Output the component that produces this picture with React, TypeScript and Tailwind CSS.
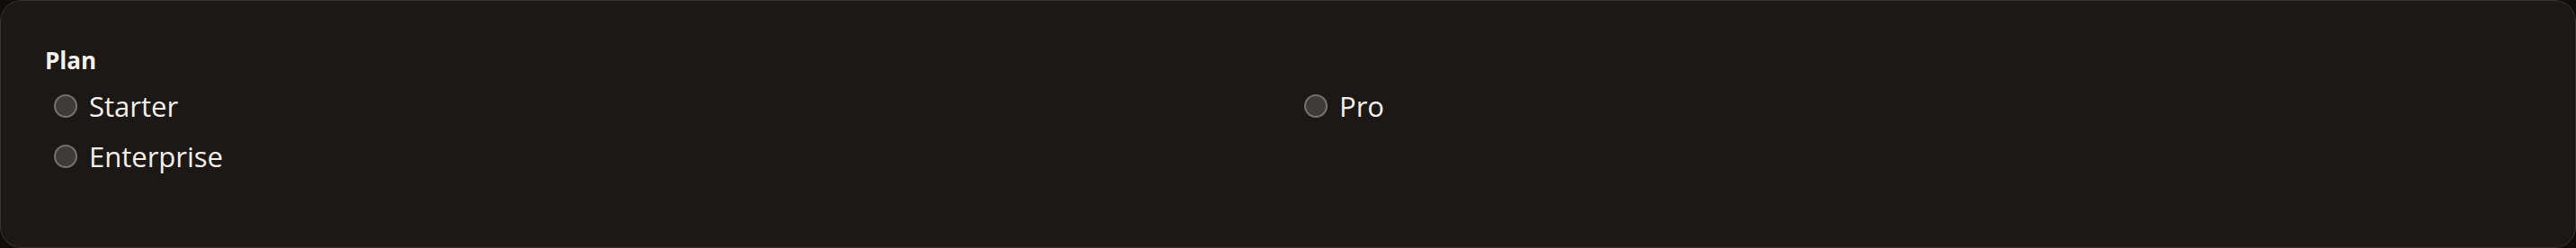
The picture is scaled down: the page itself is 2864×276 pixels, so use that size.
import React from 'react';

const PLANS = [
  { id: 'starter', label: 'Starter' },
  { id: 'pro', label: 'Pro' },
  { id: 'enterprise', label: 'Enterprise' },
];

export default function App() {
  return (
    <div className="w-full h-[276px] bg-[#110d0b]" style={{ fontFamily: '"Open Sans", Lato, sans-serif' }}>
      <div className="w-full h-full rounded-[24px] border border-[#3b3431] bg-[#1c1815] px-[49px] pt-[53px]">
        <div className="text-[26px] leading-none font-bold text-[#f5f0eb]">Plan</div>

        <div className="grid grid-cols-2 gap-x-4 gap-y-4 mt-[18px]">
          {PLANS.map((plan) => (
            <label key={plan.id} className="h-[40px] flex items-center gap-[13px] pl-[10px] cursor-pointer">
              <span className="w-[26px] h-[26px] rounded-full border-2 border-[#78726e] bg-[#3f3b39] shrink-0" />
              <span className="text-[31px] leading-none text-[#f5f0eb]">{plan.label}</span>
            </label>
          ))}
        </div>
      </div>
    </div>
  );
}
